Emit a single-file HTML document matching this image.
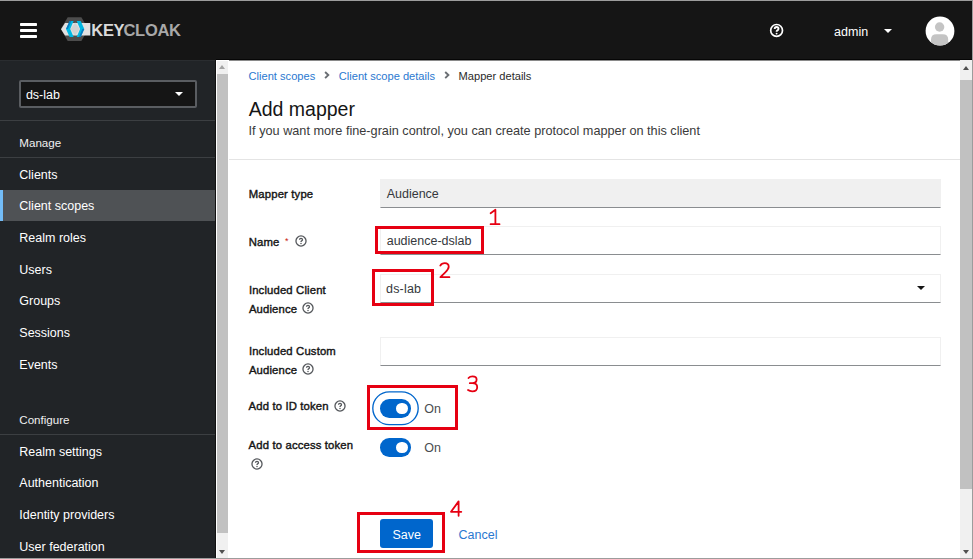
<!DOCTYPE html>
<html><head><meta charset="utf-8"><style>
html,body{margin:0;padding:0;width:973px;height:559px;overflow:hidden;background:#fff;position:relative;font-family:"Liberation Sans",sans-serif}
.t{position:absolute;white-space:nowrap;line-height:1}
#hdr{position:absolute;left:0;top:0;width:973px;height:60px;background:#151515}
.chev{position:absolute;width:4px;height:4px;border-right:1.8px solid #6a6e73;border-top:1.8px solid #6a6e73;transform:rotate(45deg)}
.inp{position:absolute;left:380px;width:559px;height:27px;border:1px solid #f0f0f0;border-bottom:1px solid #8a8d90;background:#fff}
.inp.ro{background:#f0f0f0}
</style></head><body>
<div id="hdr"></div><div style="position:absolute;left:0;top:0;width:973px;height:1px;background:#9c9c9c"></div><div style="position:absolute;left:20px;top:23px;width:17px;height:3px;border-radius:0.8px;background:#fff"></div><div style="position:absolute;left:20px;top:29px;width:17px;height:3px;border-radius:0.8px;background:#fff"></div><div style="position:absolute;left:20px;top:35px;width:17px;height:3px;border-radius:0.8px;background:#fff"></div><svg style="position:absolute;left:0;top:0" width="200" height="60" viewBox="0 0 200 60">
<polygon points="67.7,17.2 81.4,17.2 88.2,29 81.4,40.9 67.7,40.9 60.9,29" fill="#4d4d4d"/>
<polygon points="61,29.2 65,23 90.3,23 90.3,35.5 65,35.5" fill="#e1e1e1"/>
<polygon points="75.15,22.5 79.6,29 75.15,35.5 70.7,29" fill="#d2d2d2"/>
<polygon points="66,29 69.6,21 73.6,21 70.2,29 73.6,37 69.6,37" fill="#00b8e3"/>
<polygon points="84.3,29 80.7,21 76.7,21 80.1,29 76.7,37 80.7,37" fill="#00b8e3"/>
<polygon points="66,29 69.6,21 71.4,21 67.9,29" fill="#0b7bc0"/>
<polygon points="84.3,29 80.7,37 78.9,37 82.4,29" fill="#0b7bc0"/>
</svg><div class="t" style="left:91.3px;top:22.33px;font-size:16.5px;color:#dadada;font-weight:bold;letter-spacing:-0.3px;">KEY</div>
<div class="t" style="left:123.5px;top:22.33px;font-size:16.5px;color:#a8a8a8;font-weight:bold;letter-spacing:-0.3px;">CLOAK</div>
<svg style="position:absolute;left:769px;top:23px" width="15" height="15" viewBox="0 0 15 15">
<circle cx="7.6" cy="7.4" r="5.9" fill="none" stroke="#fff" stroke-width="1.7"/>
<path d="M5.7 6.0 Q5.7 4.0 7.6 4.0 Q9.5 4.0 9.5 5.8 Q9.5 6.8 8.4 7.4 Q7.6 7.9 7.6 8.7" fill="none" stroke="#fff" stroke-width="1.9"/>
<circle cx="7.6" cy="10.6" r="0.95" fill="#fff"/>
</svg><div class="t" style="left:834.1px;top:25.92px;font-size:12.5px;color:#fff;">admin</div>
<div style="position:absolute;left:884px;top:28.5px;width:0;height:0;border-left:4px solid transparent;border-right:4px solid transparent;border-top:4.5px solid #fff"></div><svg style="position:absolute;left:925px;top:16px" width="30" height="30" viewBox="0 0 30 30">
<defs><clipPath id="avc"><circle cx="15" cy="15" r="14.4"/></clipPath></defs>
<circle cx="15" cy="15" r="14.4" fill="#fff"/>
<g clip-path="url(#avc)">
<circle cx="14.6" cy="11" r="4.7" fill="#c4c4c4"/>
<path d="M6 30 L6 23.5 Q6 18.2 11.5 18.2 L17.7 18.2 Q23.2 18.2 23.2 23.5 L23.2 30 Z" fill="#c4c4c4"/>
</g></svg><div style="position:absolute;left:0;top:60px;width:215px;height:498px;background:#212427"></div><div style="position:absolute;left:19px;top:80px;width:174px;height:24px;border:2px solid #5a5d61;border-radius:2px;background:#151515"></div><div class="t" style="left:25.9px;top:89.32px;font-size:12.5px;color:#fff;">ds-lab</div>
<div style="position:absolute;left:175px;top:92px;width:0;height:0;border-left:4px solid transparent;border-right:4px solid transparent;border-top:4.5px solid #fff"></div><div style="position:absolute;left:0;top:120px;width:215px;height:1px;background:#3c3f42"></div><div class="t" style="left:19.3px;top:136.78px;font-size:11.6px;color:#f0f0f0;">Manage</div>
<div style="position:absolute;left:0;top:157px;width:215px;height:1px;background:#3c3f42"></div><div style="position:absolute;left:0;top:190px;width:215px;height:31px;background:#4f5255"></div><div style="position:absolute;left:0;top:190px;width:3px;height:31px;background:#73bcf7"></div><div class="t" style="left:19.3px;top:168.62px;font-size:12.5px;color:#fff;">Clients</div>
<div class="t" style="left:19.3px;top:200.29px;font-size:12.5px;color:#fff;">Client scopes</div>
<div class="t" style="left:19.3px;top:231.96px;font-size:12.5px;color:#fff;">Realm roles</div>
<div class="t" style="left:19.3px;top:263.63px;font-size:12.5px;color:#fff;">Users</div>
<div class="t" style="left:19.3px;top:295.30px;font-size:12.5px;color:#fff;">Groups</div>
<div class="t" style="left:19.3px;top:326.97px;font-size:12.5px;color:#fff;">Sessions</div>
<div class="t" style="left:19.3px;top:358.64px;font-size:12.5px;color:#fff;">Events</div>
<div class="t" style="left:19.3px;top:414.08px;font-size:11.6px;color:#f0f0f0;">Configure</div>
<div style="position:absolute;left:0;top:434px;width:215px;height:1px;background:#3c3f42"></div><div class="t" style="left:19.3px;top:445.82px;font-size:12.5px;color:#fff;">Realm settings</div>
<div class="t" style="left:19.3px;top:477.49px;font-size:12.5px;color:#fff;">Authentication</div>
<div class="t" style="left:19.3px;top:509.16px;font-size:12.5px;color:#fff;">Identity providers</div>
<div class="t" style="left:19.3px;top:540.83px;font-size:12.5px;color:#fff;">User federation</div>
<div style="position:absolute;left:215px;top:60px;width:1px;height:498px;background:#111"></div><div style="position:absolute;left:216px;top:60px;width:13px;height:498px;background:#fff"></div><div style="position:absolute;left:217px;top:61px;width:11px;height:497px;background:#f0f0f0"></div><div style="position:absolute;left:217px;top:74px;width:11px;height:459px;background:#c1c1c1"></div><div style="position:absolute;left:219px;top:65px;width:0;height:0;border-left:3.5px solid transparent;border-right:3.5px solid transparent;border-bottom:4px solid #a3a3a3"></div><div style="position:absolute;left:219px;top:550px;width:0;height:0;border-left:3.5px solid transparent;border-right:3.5px solid transparent;border-top:4px solid #505050"></div><div style="position:absolute;left:216px;top:59px;width:756px;height:1px;background:#060606"></div><div style="position:absolute;left:229px;top:60px;width:731px;height:1px;background:#8a8a8a"></div><div style="position:absolute;left:0;top:60px;width:215px;height:1px;background:#2a2d30"></div><div class="t" style="left:248.6px;top:70.60px;font-size:11.1px;color:#2a78d0;">Client scopes</div>
<svg style="position:absolute;left:320px;top:68px" width="12" height="14" viewBox="320 68 12 14"><path d="M325.1 72 L328.3 75 L325.1 78.1" fill="none" stroke="#6a6e73" stroke-width="1.9"/></svg><div class="t" style="left:338.8px;top:70.60px;font-size:11.1px;color:#2a78d0;">Client scope details</div>
<svg style="position:absolute;left:440px;top:68px" width="12" height="14" viewBox="440 68 12 14"><path d="M445.2 72 L448.4 75 L445.2 78.1" fill="none" stroke="#6a6e73" stroke-width="1.9"/></svg><div class="t" style="left:458.6px;top:70.60px;font-size:11.1px;color:#2a2a2a;">Mapper details</div>
<div class="t" style="left:248.7px;top:99.79px;font-size:19.5px;color:#151515;">Add mapper</div>
<div class="t" style="left:248.6px;top:125.15px;font-size:12.7px;color:#3a3a3a;">If you want more fine-grain control, you can create protocol mapper on this client</div>
<div style="position:absolute;left:229px;top:159px;width:731px;height:1px;background:#e4e4e4"></div><div class="t" style="left:248.8px;top:189.13px;font-size:11.3px;color:#151515;-webkit-text-stroke:0.4px #151515;letter-spacing:0.15px;">Mapper type</div>
<div class="t" style="left:248.8px;top:236.83px;font-size:11.3px;color:#151515;-webkit-text-stroke:0.4px #151515;letter-spacing:0.15px;">Name</div>
<div class="t" style="left:284.9px;top:237.48px;font-size:9px;color:#c9190b;">*</div>
<div class="t" style="left:248.9px;top:284.53px;font-size:11.3px;color:#151515;-webkit-text-stroke:0.4px #151515;letter-spacing:0.15px;">Included Client</div>
<div class="t" style="left:248.9px;top:303.63px;font-size:11.3px;color:#151515;-webkit-text-stroke:0.4px #151515;letter-spacing:0.15px;">Audience</div>
<div class="t" style="left:248.9px;top:345.93px;font-size:11.3px;color:#151515;-webkit-text-stroke:0.4px #151515;letter-spacing:0.15px;">Included Custom</div>
<div class="t" style="left:248.9px;top:364.63px;font-size:11.3px;color:#151515;-webkit-text-stroke:0.4px #151515;letter-spacing:0.15px;">Audience</div>
<div class="t" style="left:248.6px;top:400.83px;font-size:11.3px;color:#151515;-webkit-text-stroke:0.4px #151515;letter-spacing:0.15px;">Add to ID token</div>
<div class="t" style="left:248.6px;top:440.23px;font-size:11.3px;color:#151515;-webkit-text-stroke:0.4px #151515;letter-spacing:0.15px;">Add to access token</div>
<svg style="position:absolute;left:294.2px;top:234.2px" width="14" height="14" viewBox="0 0 14 14">
<circle cx="7" cy="7" r="5.05" fill="none" stroke="#55585c" stroke-width="1.3"/>
<path d="M5.5 5.8 Q5.5 4.4 7 4.4 Q8.5 4.4 8.5 5.7 Q8.5 6.5 7.6 6.9 Q7 7.2 7 8" fill="none" stroke="#55585c" stroke-width="1.3"/>
<circle cx="7" cy="9.6" r="0.75" fill="#55585c"/></svg><svg style="position:absolute;left:301.4px;top:301.4px" width="14" height="14" viewBox="0 0 14 14">
<circle cx="7" cy="7" r="5.05" fill="none" stroke="#55585c" stroke-width="1.3"/>
<path d="M5.5 5.8 Q5.5 4.4 7 4.4 Q8.5 4.4 8.5 5.7 Q8.5 6.5 7.6 6.9 Q7 7.2 7 8" fill="none" stroke="#55585c" stroke-width="1.3"/>
<circle cx="7" cy="9.6" r="0.75" fill="#55585c"/></svg><svg style="position:absolute;left:301.4px;top:362.4px" width="14" height="14" viewBox="0 0 14 14">
<circle cx="7" cy="7" r="5.05" fill="none" stroke="#55585c" stroke-width="1.3"/>
<path d="M5.5 5.8 Q5.5 4.4 7 4.4 Q8.5 4.4 8.5 5.7 Q8.5 6.5 7.6 6.9 Q7 7.2 7 8" fill="none" stroke="#55585c" stroke-width="1.3"/>
<circle cx="7" cy="9.6" r="0.75" fill="#55585c"/></svg><svg style="position:absolute;left:333.3px;top:399px" width="14" height="14" viewBox="0 0 14 14">
<circle cx="7" cy="7" r="5.05" fill="none" stroke="#55585c" stroke-width="1.3"/>
<path d="M5.5 5.8 Q5.5 4.4 7 4.4 Q8.5 4.4 8.5 5.7 Q8.5 6.5 7.6 6.9 Q7 7.2 7 8" fill="none" stroke="#55585c" stroke-width="1.3"/>
<circle cx="7" cy="9.6" r="0.75" fill="#55585c"/></svg><svg style="position:absolute;left:250.3px;top:457px" width="14" height="14" viewBox="0 0 14 14">
<circle cx="7" cy="7" r="5.05" fill="none" stroke="#55585c" stroke-width="1.3"/>
<path d="M5.5 5.8 Q5.5 4.4 7 4.4 Q8.5 4.4 8.5 5.7 Q8.5 6.5 7.6 6.9 Q7 7.2 7 8" fill="none" stroke="#55585c" stroke-width="1.3"/>
<circle cx="7" cy="9.6" r="0.75" fill="#55585c"/></svg><div class="inp ro" style="top:179px"></div><div class="t" style="left:386.7px;top:188.22px;font-size:12.5px;color:#35383c;">Audience</div>
<div class="inp" style="top:226px"></div><div class="t" style="left:386.7px;top:235.22px;font-size:12.5px;color:#35383c;">audience-dslab</div>
<div class="inp" style="top:274px"></div><div class="t" style="left:386px;top:282.82px;font-size:12.5px;color:#35383c;letter-spacing:0.2px;">ds-lab</div>
<div style="position:absolute;left:917px;top:286px;width:0;height:0;border-left:4px solid transparent;border-right:4px solid transparent;border-top:4.5px solid #151515"></div><div class="inp" style="top:337px"></div><svg style="position:absolute;left:360px;top:380px" width="70" height="60" viewBox="360 380 70 60"><rect x="372.8" y="391.8" width="45.4" height="32.9" rx="16.45" fill="none" stroke="#0066cc" stroke-width="1.35"/></svg><div style="position:absolute;left:379.7px;top:399px;width:31.4px;height:18.5px;border-radius:9.25px;background:#0066cc"></div><div style="position:absolute;left:396px;top:402.5px;width:11.5px;height:11.5px;border-radius:50%;background:#fff"></div><div class="t" style="left:424.2px;top:402.92px;font-size:12.5px;color:#4a4d51;">On</div>
<div style="position:absolute;left:379.7px;top:438.2px;width:31.4px;height:18.5px;border-radius:9.25px;background:#0066cc"></div><div style="position:absolute;left:396px;top:441.7px;width:11.5px;height:11.5px;border-radius:50%;background:#fff"></div><div class="t" style="left:424.2px;top:441.72px;font-size:12.5px;color:#4a4d51;">On</div>
<div style="position:absolute;left:379.6px;top:519.3px;width:53px;height:28.3px;border-radius:3px;background:#0066cc"></div><div class="t" style="left:392.4px;top:528.82px;font-size:12.5px;color:#fff;">Save</div>
<div class="t" style="left:458.5px;top:528.82px;font-size:12.5px;color:#2a78d0;">Cancel</div>
<div style="position:absolute;left:960px;top:60px;width:12px;height:498px;background:#f0f0f0"></div><div style="position:absolute;left:960px;top:80px;width:12px;height:408.5px;background:#c1c1c1"></div><div style="position:absolute;left:962.5px;top:66px;width:0;height:0;border-left:3.5px solid transparent;border-right:3.5px solid transparent;border-bottom:4px solid #505050"></div><div style="position:absolute;left:962.5px;top:550px;width:0;height:0;border-left:3.5px solid transparent;border-right:3.5px solid transparent;border-top:4px solid #505050"></div><div style="position:absolute;left:375px;top:225.6px;width:103.19999999999999px;height:22.5px;border:3px solid #e60012"></div><div style="position:absolute;left:372.4px;top:268.9px;width:55.60000000000002px;height:31.400000000000034px;border:3px solid #e60012"></div><div style="position:absolute;left:367.2px;top:385.2px;width:84.80000000000001px;height:38.80000000000001px;border:3px solid #e60012"></div><div style="position:absolute;left:356.9px;top:512.2px;width:82.10000000000002px;height:35.09999999999991px;border:3px solid #e60012"></div><svg style="position:absolute;left:0;top:0" width="973" height="559" viewBox="0 0 973 559">
<g fill="none" stroke="#e60012" stroke-width="1.8" stroke-linecap="round" stroke-linejoin="round">
<path d="M490.6 213.2 L495.4 209.8 L495.4 224.2 M490.6 224.2 L499.5 224.2"/>
<path d="M440.3 265.6 C441.5 263.6 443.3 263.2 444.8 263.2 C447.2 263.2 448.7 264.6 448.7 266.8 C448.7 268.8 447.3 270.4 445.3 272.3 L440.4 277.2 L449.4 277.2"/>
<path d="M468.5 378 C469.5 376.8 471 376.3 472.5 376.3 C475 376.3 476.6 377.6 476.6 379.6 C476.6 381.8 474.8 383.2 472.3 383.2 L469.8 383.2 M472.3 383.2 C475.3 383.2 477.2 384.8 477.2 387.2 C477.2 389.8 475.1 391.3 472.3 391.3 C470.6 391.3 469.2 390.9 468 390"/>
<path d="M458.6 515.8 L458.6 501.4 L451 511.8 L461.3 511.8"/>
</g></svg><div style="position:absolute;left:972px;top:0;width:1px;height:559px;background:#9c9c9c"></div><div style="position:absolute;left:0;top:558px;width:973px;height:1px;background:#9c9c9c"></div></body></html>
